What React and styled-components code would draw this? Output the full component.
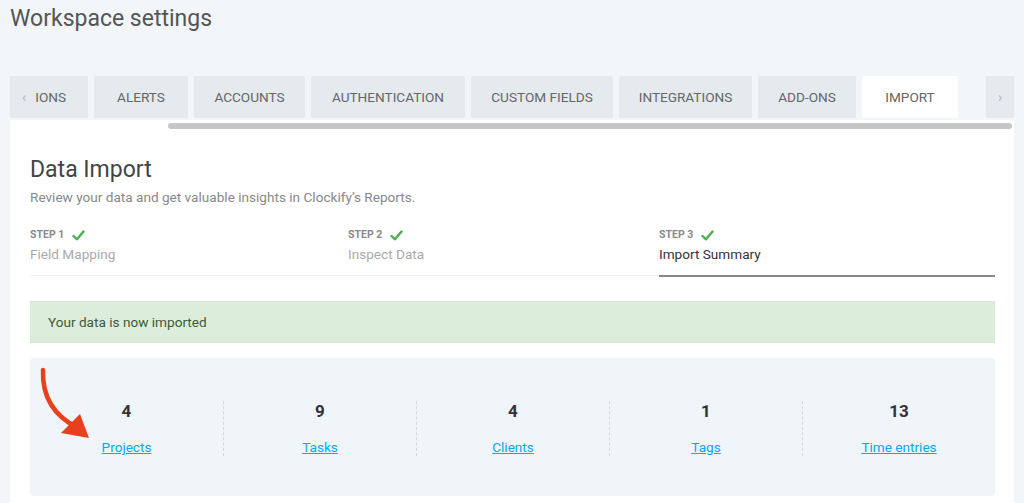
import React from "react";
import styled, { createGlobalStyle } from "styled-components";

const GlobalStyle = createGlobalStyle`
  html, body {
    margin: 0;
    padding: 0;
    background: #f2f6f8;
    font-family: Roboto, "Liberation Sans", sans-serif;
    overflow: hidden;
  }
`;

const Page = styled.div`
  padding: 0 10px;
  height: 503px;
  box-sizing: border-box;
`;

const Title = styled.h1`
  margin: 0;
  padding-top: 5px;
  height: 76px;
  box-sizing: border-box;
  font-size: 23px;
  line-height: 28px;
  font-weight: 400;
  color: #555;
`;

const TabBar = styled.div`
  display: flex;
  align-items: stretch;
  height: 42px;
  gap: 6px;
  margin-bottom: 2px;
`;

const Tab = styled.div`
  width: ${(p) => p.$w}px;
  flex: none;
  display: flex;
  align-items: center;
  justify-content: ${(p) => (p.$start ? "flex-start" : "center")};
  padding-left: ${(p) => (p.$start ? "12px" : "0")};
  box-sizing: border-box;
  background: ${(p) => (p.$active ? "#ffffff" : "#e4eaee")};
  border-radius: 2px 2px 0 0;
  font-size: 13.6px;
  color: #666;
  text-transform: uppercase;
  white-space: nowrap;
`;

const Chevron = styled.span`
  color: #b5b5b5;
  font-size: 14px;
  margin-right: 9px;
`;

const ArrowTab = styled.div`
  width: 28px;
  margin-left: 22px;
  flex: none;
  display: flex;
  align-items: center;
  justify-content: center;
  background: #e4eaee;
  color: #b5b5b5;
  font-size: 14px;
`;

const Card = styled.div`
  background: #fff;
  width: 1004px;
  height: 400px;
`;

const ScrollTrack = styled.div`
  height: 11px;
  padding: 3px 2px 0 158px;
  box-sizing: border-box;
`;

const ScrollThumb = styled.div`
  height: 6px;
  border-radius: 3px;
  background: #c6c6c6;
`;

const Content = styled.div`
  padding: 25px 19px 0 20px;
`;

const Heading = styled.h2`
  margin: 0;
  font-size: 23px;
  line-height: 28px;
  font-weight: 400;
  color: #444;
`;

const Subtitle = styled.p`
  margin: 5px 0 0;
  font-size: 13.6px;
  line-height: 16px;
  color: #888;
`;

const Steps = styled.div`
  display: grid;
  grid-template-columns: 318px 311px 1fr;
  margin-top: 23px;
`;

const Step = styled.div`
  padding-bottom: 13px;
  border-bottom: ${(p) => (p.$current ? "2px solid #888" : "1px solid #eef0f1")};
  margin-bottom: ${(p) => (p.$current ? "0" : "1px")};
`;

const StepHead = styled.div`
  display: flex;
  align-items: center;
  gap: 8px;
  font-size: 10.5px;
  line-height: 14px;
  font-weight: 700;
  color: #8a8a8a;
`;

const StepName = styled.div`
  margin-top: 4px;
  font-size: 13.6px;
  line-height: 16px;
  color: ${(p) => (p.$current ? "#333" : "#aaa")};
`;

const Alert = styled.div`
  margin-top: 24px;
  height: 42px;
  display: flex;
  align-items: center;
  padding-left: 17px;
  background: #dceedb;
  border: 1px solid #d3e9d1;
  box-sizing: border-box;
  font-size: 13.6px;
  color: #3d5a3d;
`;

const Stats = styled.div`
  position: relative;
  margin-top: 15px;
  height: 138px;
  padding: 43px 0 0;
  box-sizing: border-box;
  background: #eff5f9;
  border-radius: 4px;
  display: grid;
  grid-template-columns: repeat(5, 1fr);
  align-items: start;
`;

const Stat = styled.div`
  height: 55px;
  display: flex;
  flex-direction: column;
  align-items: center;
  border-left: ${(p) => (p.$first ? "none" : "1px dashed #d4d8db")};
`;

const Count = styled.div`
  font-size: 17px;
  line-height: 20px;
  font-weight: 700;
  color: #333;
`;

const StatLink = styled.a`
  margin-top: 18px;
  font-size: 13.6px;
  line-height: 16px;
  color: #03a9f4;
  text-decoration: underline;
  cursor: pointer;
`;

const ArrowMark = styled.svg`
  position: absolute;
  left: 0;
  top: 0;
`;

const Check = () => (
  <svg width="13" height="11" viewBox="0 0 13 11">
    <path d="M1.5 6 L5 9.3 L11.5 1.5" fill="none" stroke="#4caf50" strokeWidth="2.4" strokeLinecap="round" strokeLinejoin="round" />
  </svg>
);

const tabs = [
  { label: "ALERTS", w: 94 },
  { label: "ACCOUNTS", w: 111 },
  { label: "AUTHENTICATION", w: 154 },
  { label: "CUSTOM FIELDS", w: 142 },
  { label: "INTEGRATIONS", w: 133 },
  { label: "ADD-ONS", w: 98 },
  { label: "IMPORT", w: 96, active: true },
];

const steps = [
  { n: 1, name: "Field Mapping" },
  { n: 2, name: "Inspect Data" },
  { n: 3, name: "Import Summary", current: true },
];

const stats = [
  { count: 4, label: "Projects" },
  { count: 9, label: "Tasks" },
  { count: 4, label: "Clients" },
  { count: 1, label: "Tags" },
  { count: 13, label: "Time entries" },
];

export default function App() {
  return (
    <Page>
      <GlobalStyle />
      <Title>Workspace settings</Title>
      <TabBar>
        <Tab $w={78} $start>
          <Chevron>‹</Chevron>IONS
        </Tab>
        {tabs.map((t) => (
          <Tab key={t.label} $w={t.w} $active={t.active}>
            {t.label}
          </Tab>
        ))}
        <ArrowTab>›</ArrowTab>
      </TabBar>
      <Card>
        <ScrollTrack>
          <ScrollThumb />
        </ScrollTrack>
        <Content>
          <Heading>Data Import</Heading>
          <Subtitle>Review your data and get valuable insights in Clockify’s Reports.</Subtitle>
          <Steps>
            {steps.map((s) => (
              <Step key={s.n} $current={s.current}>
                <StepHead>
                  STEP {s.n} <Check />
                </StepHead>
                <StepName $current={s.current}>{s.name}</StepName>
              </Step>
            ))}
          </Steps>
          <Alert>Your data is now imported</Alert>
          <Stats>
            {stats.map((s, i) => (
              <Stat key={s.label} $first={i === 0}>
                <Count>{s.count}</Count>
                <StatLink>{s.label}</StatLink>
              </Stat>
            ))}
            <ArrowMark width="100" height="100" viewBox="0 0 100 100">
              <path d="M13 12 C12 38 24 58 48 70" fill="none" stroke="#e8401c" strokeWidth="4.5" strokeLinecap="round" />
              <polygon points="31,75 50,56 59,80" fill="#e8401c" />
            </ArrowMark>
          </Stats>
        </Content>
      </Card>
    </Page>
  );
}
